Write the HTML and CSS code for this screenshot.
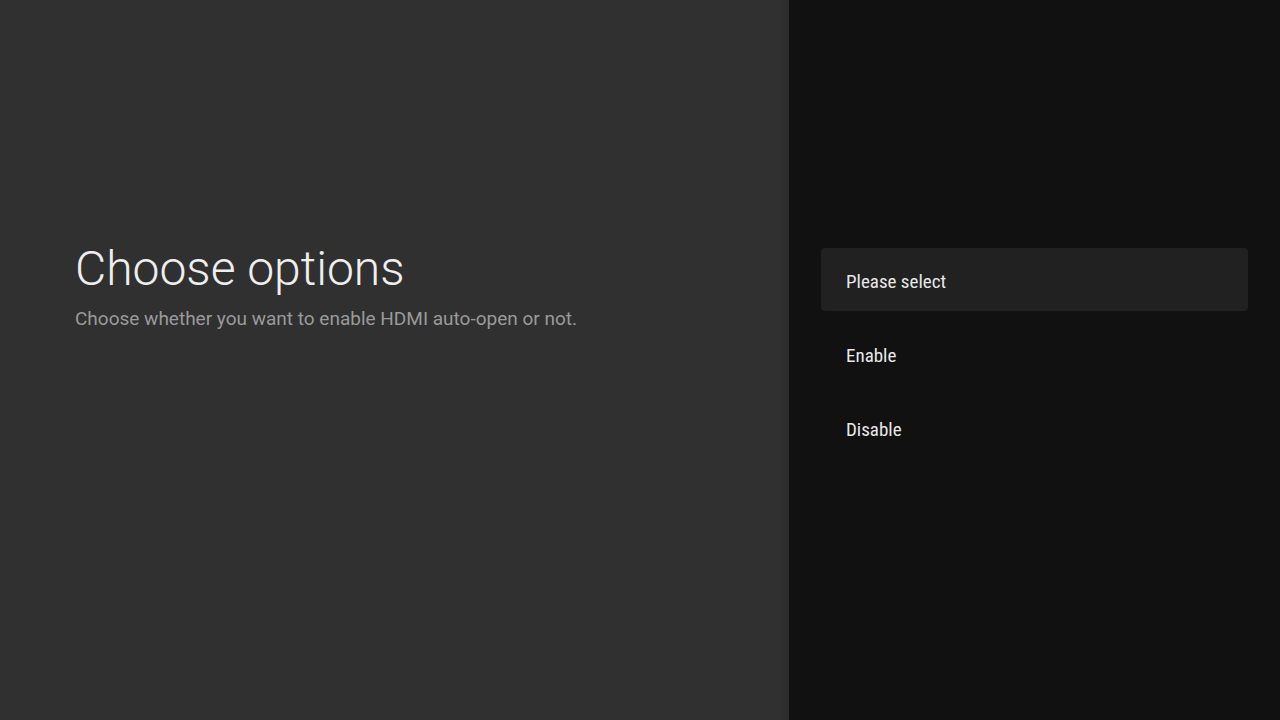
FILE: index.html
```html
<!DOCTYPE html>
<html>
<head>
<meta charset="utf-8">
<link rel="stylesheet" href="styles.css">
</head>
<body>
<div class="screen">
  <section class="guidance">
    <h1 class="title">Choose options</h1>
    <p class="desc">Choose whether you want to enable HDMI auto-open or not.</p>
  </section>
  <section class="actions">
    <div class="item selected">Please select</div>
    <div class="item">Enable</div>
    <div class="item">Disable</div>
  </section>
</div>
</body>
</html>
```
FILE: styles.css
```css
html, body {
  margin: 0;
  padding: 0;
  width: 1280px;
  height: 720px;
  overflow: hidden;
  background: #111111;
}
.screen {
  display: flex;
  width: 1280px;
  height: 720px;
}
.guidance {
  width: 789px;
  box-sizing: border-box;
  background: linear-gradient(to right, #303030 0, #303030 781px, #2b2b2b 789px);
  padding: 241px 0 0 75px;
  font-family: Roboto, "Open Sans", sans-serif;
}
.title {
  margin: 0;
  font-weight: 300;
  font-size: 48px;
  line-height: 56px;
  color: #eeeeee;
}
.desc {
  margin: 9px 0 0 0;
  font-weight: 400;
  font-size: 19px;
  line-height: 26px;
  color: #9a9a9a;
}
.actions {
  flex: 1;
  background: #111111;
  padding: 248px 32px 0 32px;
  display: flex;
  flex-direction: column;
  gap: 11px;
}
.item {
  height: 63px;
  box-sizing: border-box;
  padding: 3px 25px 0 25px;
  display: flex;
  align-items: center;
  border-radius: 4px;
  font-family: Roboto, sans-serif;
  font-stretch: 75%;
  font-size: 19px;
  color: #e8e8e8;
}
.item.selected {
  background: #212121;
}
```
